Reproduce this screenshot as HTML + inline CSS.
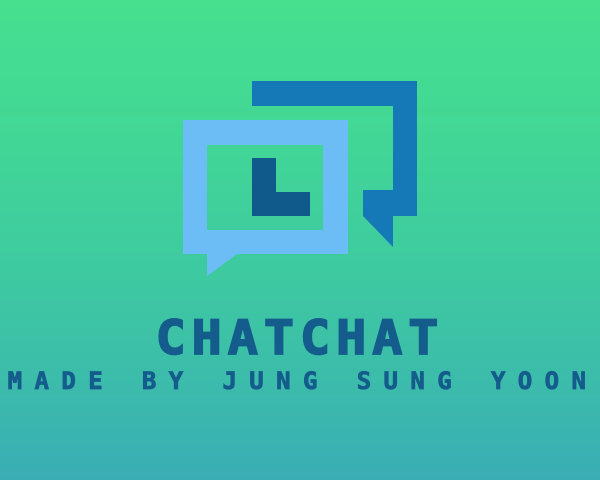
<!DOCTYPE html>
<html><head><meta charset="utf-8"><style>
html,body{margin:0;padding:0}
body{width:600px;height:480px;overflow:hidden;position:relative;
background:linear-gradient(180deg,#46e08f 0%,#41d696 30%,#3ec8a2 60%,#3bb8ae 85%,#3aadb4 100%);
font-family:"DejaVu Sans Mono","Liberation Mono",monospace;}
svg{position:absolute;left:0;top:0}
.t{position:absolute;left:0;width:600px;text-align:center;color:#145c8c;font-weight:bold;white-space:nowrap}
#a{top:310px;font-size:50px;letter-spacing:6px;line-height:56px;transform:scaleY(0.95);-webkit-text-stroke:1.8px #145c8c}
#b{top:368px;font-size:24px;letter-spacing:12.4px;line-height:26px;left:3px;-webkit-text-stroke:0.8px #145c8c}
</style></head><body>
<svg width="600" height="480">
  <path fill="#1679b7" d="M252 81H417V216H393V247L363 216V190H393V106H252Z"/>
  <path fill="#6cbdf5" fill-rule="evenodd" d="M183 120H348V254H237L207 276V254H183Z M207 145V230H323V145Z"/>
  <path fill="#0f5a8a" d="M252 158H276V192H310V216H252Z"/>
</svg>
<div class="t" id="a">CHATCHAT</div>
<div class="t" id="b">MADE BY JUNG SUNG YOON</div>
</body></html>
